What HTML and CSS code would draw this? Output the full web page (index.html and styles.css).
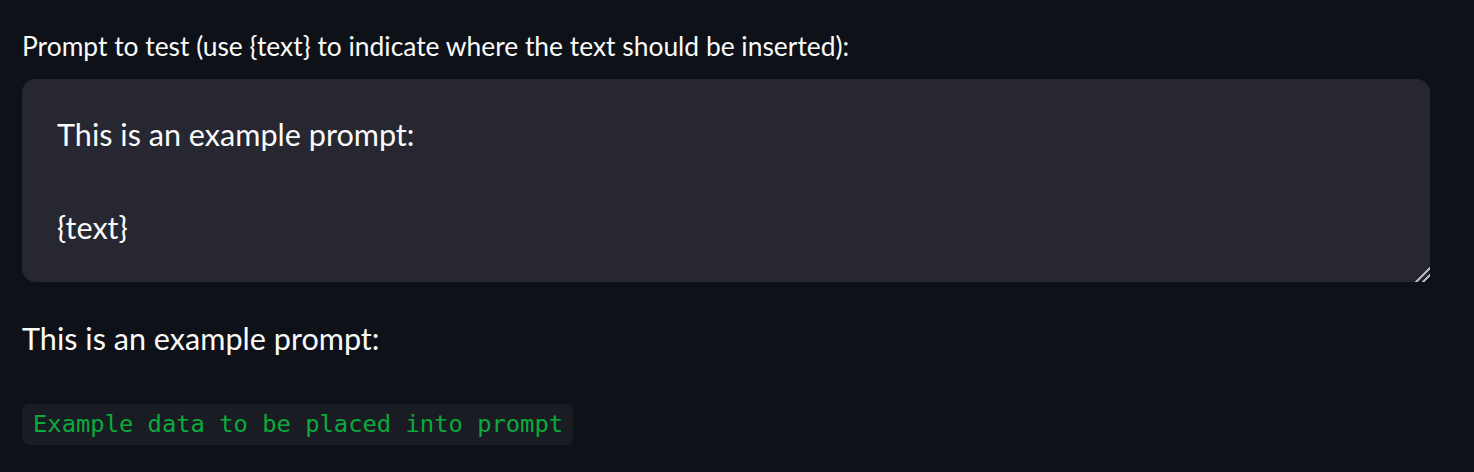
FILE: index.html
```html
<!DOCTYPE html>
<html lang="en">
<head>
<meta charset="utf-8">
<title>Prompt tester</title>
<link rel="stylesheet" href="styles.css">
</head>
<body>
<main class="page">
  <label class="field-label" for="prompt">Prompt to test (use {text} to indicate where the text should be inserted):</label>
  <textarea id="prompt" class="prompt-input">This is an example prompt:

{text}</textarea>
  <p class="preview">This is an example prompt:</p>
  <code class="code-chip">Example data to be placed into prompt</code>
</main>
</body>
</html>
```
FILE: styles.css
```css
html, body {
  margin: 0;
  padding: 0;
  background: #0e1117;
}

.page {
  display: flex;
  flex-direction: column;
  align-items: flex-start;
  padding: 25px 44px 0 22px;
  font-family: Lato, "Noto Sans", sans-serif;
  color: #fafafa;
}

.field-label {
  font-size: 26.4px;
  line-height: 42px;
  color: #fafafa;
}

.prompt-input {
  box-sizing: border-box;
  align-self: stretch;
  margin: 12px 0 0 0;
  height: 203px;
  padding: 33px 35px 0 35px;
  border: none;
  border-radius: 14px;
  background: #262730;
  color: #fafafa;
  color-scheme: dark;
  font-family: Lato, "Noto Sans", sans-serif;
  font-size: 30.6px;
  line-height: 46.5px;
  resize: vertical;
  outline: none;
  overflow: hidden;
}

.prompt-input::-webkit-resizer {
  background: linear-gradient(135deg,
    transparent 0 49%,
    #b4b4bc 49% 58%,
    transparent 58% 72%,
    #b4b4bc 72% 81%,
    transparent 81%);
}

.preview {
  margin: 34px 0 0 0;
  font-size: 30.6px;
  line-height: 46.5px;
}

.code-chip {
  margin-top: 41px;
  padding: 0 10px 0 11px;
  height: 41px;
  border-radius: 7px;
  background: #1a1c24;
  color: #09ab3b;
  font-family: "DejaVu Sans Mono", "Liberation Mono", monospace;
  font-size: 23.8px;
  line-height: 41px;
  white-space: pre;
}
```
